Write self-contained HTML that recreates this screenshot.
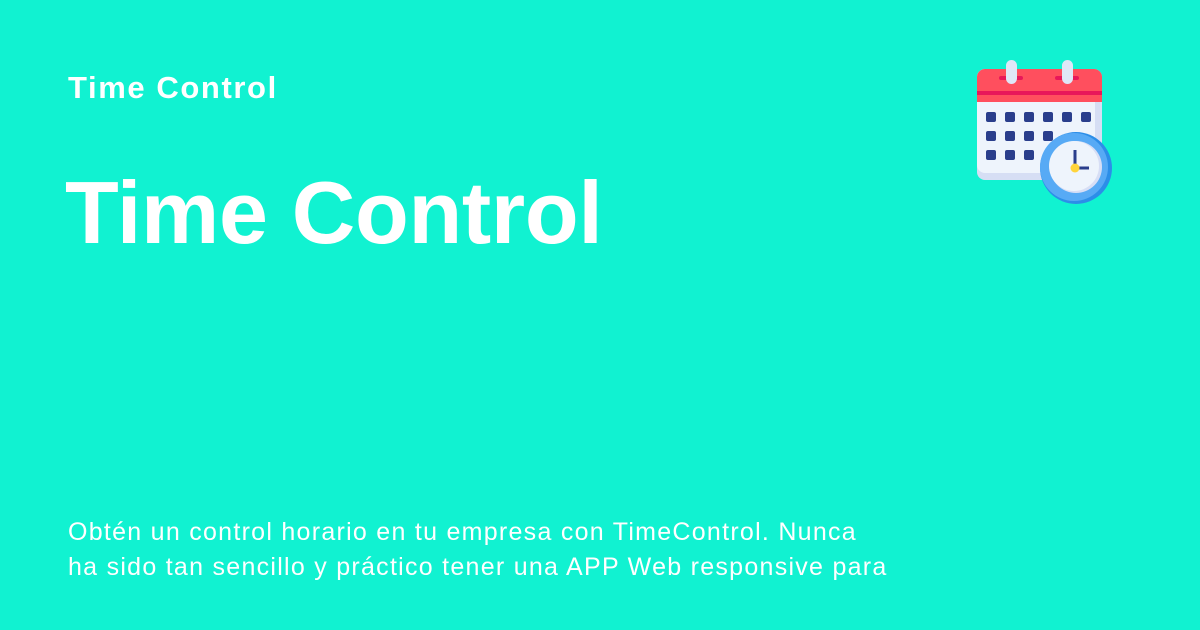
<!DOCTYPE html>
<html><head><meta charset="utf-8"><style>
body{margin:0;width:1200px;height:630px;background:#11f2d1;font-family:"Liberation Sans",sans-serif;color:#fff;position:relative;overflow:hidden}
.a{position:absolute;left:68px;top:70px;font-size:31px;font-weight:bold;letter-spacing:1.6px}
.b{position:absolute;left:65px;top:165px;font-size:88px;font-weight:bold;letter-spacing:-0.3px;line-height:1.1}
.c{position:absolute;left:68px;top:515px;font-size:25px;line-height:35px;width:900px;letter-spacing:1.27px}
svg{position:absolute;left:960px;top:50px}
</style></head><body>
<div class="a">Time Control</div>
<div class="b">Time Control</div>
<div class="c">Obtén un control horario en tu empresa con TimeControl. Nunca<br>ha sido tan sencillo y práctico tener una APP Web responsive para</div>
<svg width="170" height="170" viewBox="960 50 170 170">
<rect x="977" y="69" width="125" height="111" rx="8" fill="#d6def4"/>
<rect x="977" y="69" width="118" height="104" rx="8" fill="#eef4fc"/>
<path d="M985 69h109a8 8 0 0 1 8 8v25h-125v-25a8 8 0 0 1 8-8z" fill="#ff4f5e"/>
<rect x="977" y="91" width="125" height="4" fill="#e8175a"/>
<rect x="999" y="76" width="24" height="4" rx="2" fill="#e8175a"/>
<rect x="1055" y="76" width="24" height="4" rx="2" fill="#e8175a"/>
<rect x="1006" y="60" width="11" height="24" rx="5.5" fill="#dfe7f7"/>
<rect x="1062" y="60" width="11" height="24" rx="5.5" fill="#dfe7f7"/>
<g fill="#2a3e8c">
<rect x="986" y="112" width="10" height="10" rx="2"/><rect x="1005" y="112" width="10" height="10" rx="2"/><rect x="1024" y="112" width="10" height="10" rx="2"/><rect x="1043" y="112" width="10" height="10" rx="2"/><rect x="1062" y="112" width="10" height="10" rx="2"/><rect x="1081" y="112" width="10" height="10" rx="2"/>
<rect x="986" y="131" width="10" height="10" rx="2"/><rect x="1005" y="131" width="10" height="10" rx="2"/><rect x="1024" y="131" width="10" height="10" rx="2"/><rect x="1043" y="131" width="10" height="10" rx="2"/>
<rect x="986" y="150" width="10" height="10" rx="2"/><rect x="1005" y="150" width="10" height="10" rx="2"/><rect x="1024" y="150" width="10" height="10" rx="2"/>
</g>
<circle cx="1076" cy="168" r="36" fill="#2c8ee8"/>
<circle cx="1074" cy="167" r="34" fill="#57aaf5"/>
<circle cx="1076" cy="167" r="26" fill="#d7def5"/>
<circle cx="1074" cy="166" r="25" fill="#eef4fc"/>
<path d="M1075 150v18h14" stroke="#2a3e8c" stroke-width="3" fill="none"/>
<circle cx="1075" cy="168" r="4.5" fill="#ffd43b"/>
</svg>
</body></html>
